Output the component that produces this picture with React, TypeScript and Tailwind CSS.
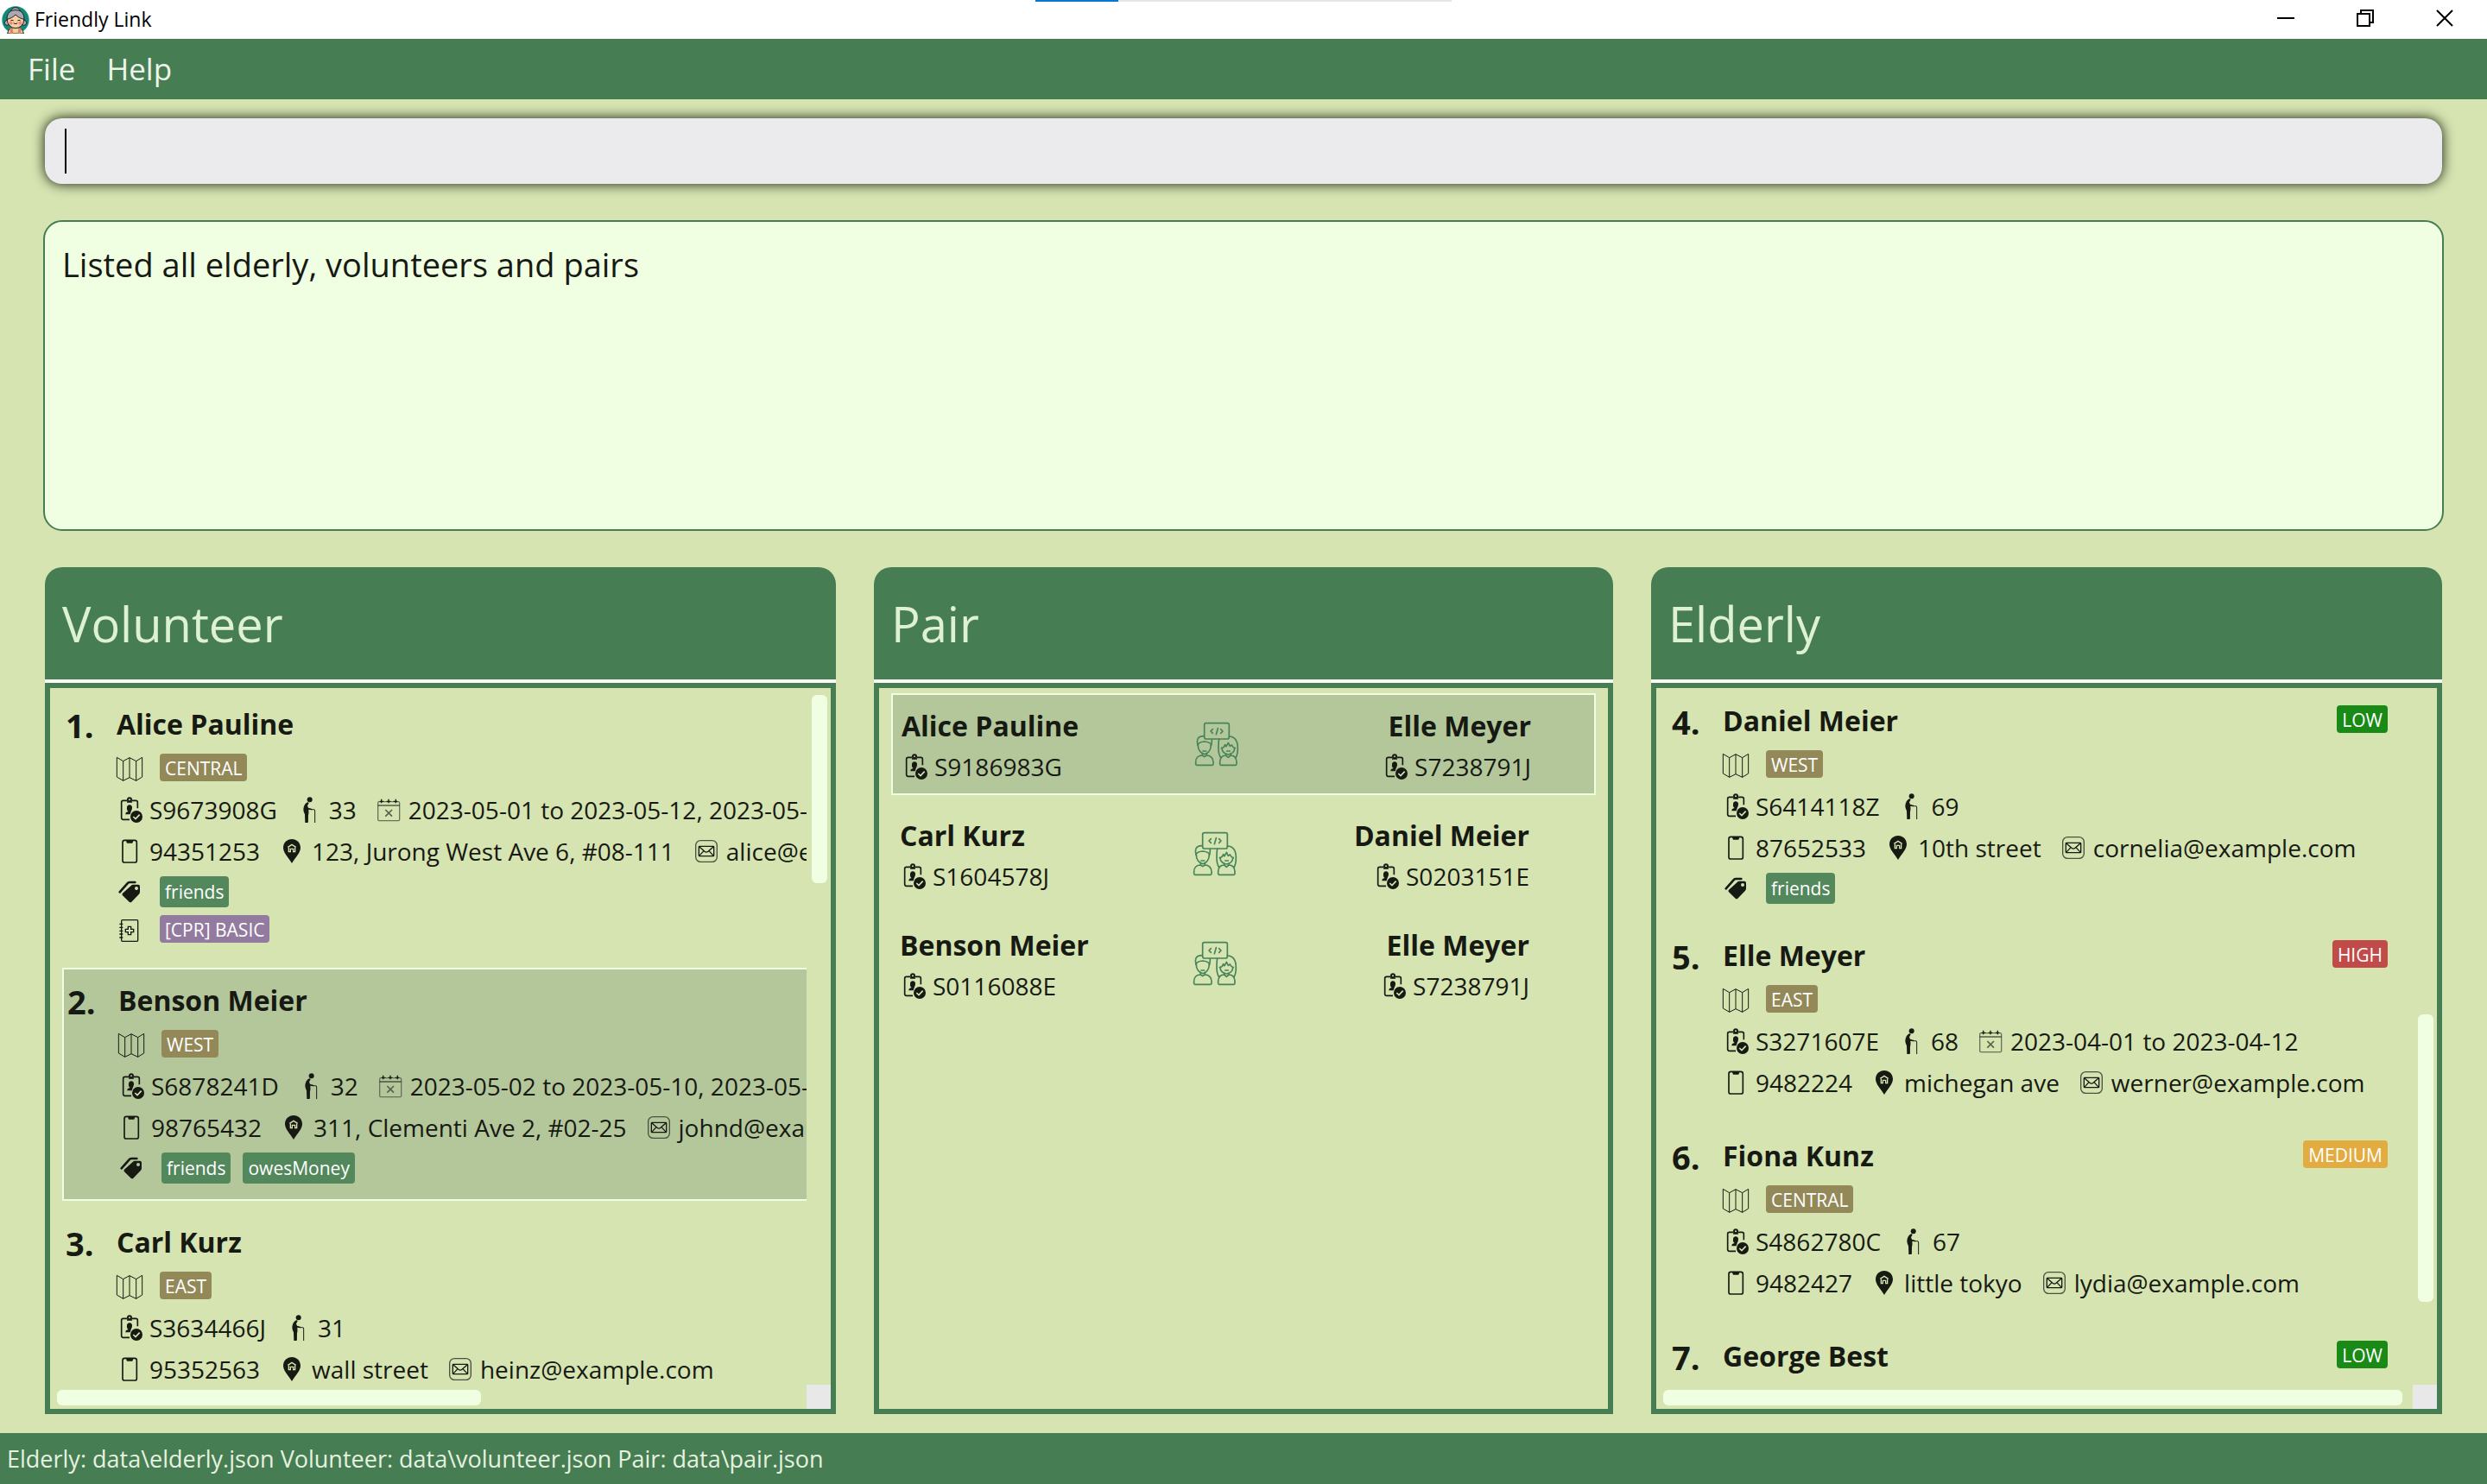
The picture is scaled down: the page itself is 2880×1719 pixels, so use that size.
import type { ReactNode } from "react";

type Level = "LOW" | "MEDIUM" | "HIGH";

interface Person {
  index: number;
  name: string;
  region?: string;
  nric?: string;
  age?: number;
  dates?: string;
  phone?: string;
  address?: string;
  email?: string;
  tags?: string[];
  medical?: string;
  risk?: Level;
  selected?: boolean;
}

const volunteers: Person[] = [
  {
    index: 1,
    name: "Alice Pauline",
    region: "CENTRAL",
    nric: "S9673908G",
    age: 33,
    dates: "2023-05-01 to 2023-05-12, 2023-05-15",
    phone: "94351253",
    address: "123, Jurong West Ave 6, #08-111",
    email: "alice@example.com",
    tags: ["friends"],
    medical: "[CPR] BASIC",
  },
  {
    index: 2,
    name: "Benson Meier",
    region: "WEST",
    nric: "S6878241D",
    age: 32,
    dates: "2023-05-02 to 2023-05-10, 2023-05-15",
    phone: "98765432",
    address: "311, Clementi Ave 2, #02-25",
    email: "johnd@example.com",
    tags: ["friends", "owesMoney"],
    selected: true,
  },
  {
    index: 3,
    name: "Carl Kurz",
    region: "EAST",
    nric: "S3634466J",
    age: 31,
    phone: "95352563",
    address: "wall street",
    email: "heinz@example.com",
  },
];

const elderly: Person[] = [
  {
    index: 4,
    name: "Daniel Meier",
    region: "WEST",
    nric: "S6414118Z",
    age: 69,
    phone: "87652533",
    address: "10th street",
    email: "cornelia@example.com",
    tags: ["friends"],
    risk: "LOW",
  },
  {
    index: 5,
    name: "Elle Meyer",
    region: "EAST",
    nric: "S3271607E",
    age: 68,
    dates: "2023-04-01 to 2023-04-12",
    phone: "9482224",
    address: "michegan ave",
    email: "werner@example.com",
    risk: "HIGH",
  },
  {
    index: 6,
    name: "Fiona Kunz",
    region: "CENTRAL",
    nric: "S4862780C",
    age: 67,
    phone: "9482427",
    address: "little tokyo",
    email: "lydia@example.com",
    risk: "MEDIUM",
  },
  { index: 7, name: "George Best", risk: "LOW" },
];

const pairs = [
  { volunteer: "Alice Pauline", volunteerId: "S9186983G", elder: "Elle Meyer", elderId: "S7238791J", selected: true },
  { volunteer: "Carl Kurz", volunteerId: "S1604578J", elder: "Daniel Meier", elderId: "S0203151E", selected: false },
  { volunteer: "Benson Meier", volunteerId: "S0116088E", elder: "Elle Meyer", elderId: "S7238791J", selected: false },
];

const riskColor: Record<Level, string> = {
  LOW: "bg-[#188a15]",
  MEDIUM: "bg-[#e2ac41]",
  HIGH: "bg-[#c04b48]",
};

const selectedRow = "border-2 border-[#f0ffe2] bg-[#b4c79b]";
const plainRow = "border-y-2 border-r-4 border-transparent";

function Glyph({ children }: { children: ReactNode }) {
  return (
    <svg viewBox="0 0 90 90" className="size-[30px] shrink-0 overflow-visible" fill="none" stroke="currentColor" aria-hidden="true">
      {children}
    </svg>
  );
}

const MapIcon = () => (
  <Glyph>
    <path strokeWidth="3" d="M1 10 23 23 45 11 68 23 89 10V78L68 91 45 80 23 91 1 78Z" />
    <path strokeWidth="3" d="M23 23V91M45 11V80M68 23V91" />
  </Glyph>
);

const IdIcon = () => (
  <Glyph>
    <path strokeWidth="5" d="M37 13H23q-6 0-6 6V73q0 6 6 6H45M53 13H67q6 0 6 6V40" />
    <circle cx="45" cy="10" r="6" strokeWidth="6" />
    <path stroke="none" fill="currentColor" d="M36 16H54V20H36ZM45 28a9 9 0 0 1 9 10c0 6-3 9-4 13l-3 10H31c0-6 3-9 10-10-4-3-6-7-5-13a9 9 0 0 1 9-10Z" />
    <circle cx="69" cy="69" r="21" stroke="none" fill="currentColor" />
    <path stroke="#d5e4b1" strokeWidth="5" d="M58 69 66 77 80 62" />
  </Glyph>
);

const WalkIcon = () => (
  <Glyph>
    <circle cx="47" cy="10" r="9" stroke="none" fill="currentColor" />
    <path
      stroke="none"
      fill="currentColor"
      d="M39 19C31 22 26 32 25 43c0 8 3 13 5 18l1 29h9l1-24 2-6c1-6 0-12 0-16l10 2c2 0 3-4 0-5l-11-3-3-7 5-9c-1-3-3-4-5-3Z"
    />
    <path strokeWidth="3" d="M40 60V89M52 44H59Q65 43 65 48V90" />
  </Glyph>
);

const CalendarIcon = () => (
  <Glyph>
    <rect x="8" y="17" width="75" height="66" rx="4" strokeWidth="4" stroke="#69725a" />
    <path strokeWidth="3" d="M8 30H83" />
    <path strokeWidth="4" d="M14 16H28M38 16H52M62 16H76M20 8V22M45 8V22M70 8V22" />
    <path strokeWidth="5" stroke="#59614b" d="M34 45 57 68M57 45 34 68" />
  </Glyph>
);

const PhoneIcon = () => (
  <Glyph>
    <rect x="21" y="7" width="49" height="77" rx="7" strokeWidth="5" />
    <path stroke="none" fill="currentColor" d="M32 6H59L55 17H36Z" />
  </Glyph>
);

const PinIcon = () => (
  <Glyph>
    <path stroke="none" fill="currentColor" d="M45 3C28 3 15 16 15 33c0 17 16 31 30 54 14-23 30-37 30-54C75 16 62 3 45 3Z" />
    <path stroke="#d5e4b1" strokeWidth="4" d="M31 31 45 22 59 31M34 32V47H40V37H50V47H56V32" />
  </Glyph>
);

const MailIcon = () => (
  <Glyph>
    <rect x="8" y="8" width="74" height="74" rx="17" strokeWidth="4" stroke="#4a5140" />
    <rect x="19" y="28" width="52" height="34" rx="2" strokeWidth="4" />
    <path strokeWidth="4" d="M20 29 39 46Q45 51 51 46L70 29M20 61 36 44M70 61 54 44" />
  </Glyph>
);

const TagIcon = () => (
  <Glyph>
    <path strokeWidth="8" strokeLinecap="round" strokeLinejoin="round" d="M11 46 37 17Q40 12 46 12H64" />
    <path
      fillRule="evenodd"
      stroke="none"
      fill="currentColor"
      d="M50 24Q53 20 58 20H75Q81 20 81 27V46Q81 50 78 53L52 80Q48 84 44 80L21 58Q17 54 21 50ZM69 27a6 6 0 1 0 0 12 6 6 0 0 0 0-12Z"
    />
  </Glyph>
);

const MedicalIcon = () => (
  <Glyph>
    <rect x="17" y="14" width="57" height="74" rx="3" strokeWidth="4" />
    <path strokeWidth="4" d="M10 28H22M10 40H22M10 52H22M10 63H22M10 75H22" />
    <path strokeWidth="4" d="M40 37H50V46H59V56H50V65H40V56H31V46H40Z" />
  </Glyph>
);

const PairIcon = () => (
  <svg viewBox="0 0 156 156" className="mb-1.5 size-[52px] shrink-0 text-[#47835a]" fill="none" stroke="currentColor" strokeWidth="5" strokeLinejoin="round" strokeLinecap="round" aria-hidden="true">
    <rect x="35" y="5" width="86" height="55" rx="6" />
    <path d="M64 26 57 33 64 40M82 23 76 44M92 26 99 33 92 40" />
    <path d="M12 82C8 68 8 50 33 50M61 62Q62 72 58 82" />
    <path d="M12 80Q17 70 35 69 53 70 60 80M13 81C12 98 24 112 36 113 48 112 58 96 58 82M30 102H41" />
    <path d="M28 109V117L35 122 43 117V109M28 117C14 117 5 126 5 140V147Q5 151 9 151H62Q66 151 66 147V140C66 126 56 117 43 117" />
    <path d="M86 61C84 70 84 80 84 92 84 108 86 116 92 125M121 51C144 52 151 68 151 92 151 108 150 116 144 125" />
    <path d="M94 92Q104 90 107 80L111 86 118 73 124 85 130 81Q134 90 142 92M96 92C96 104 106 113 118 114 130 112 140 104 140 92M113 102H124" />
    <path d="M110 111V117L118 124 126 117V111M110 117C98 117 90 126 89 140V147Q89 151 93 151H143Q147 151 147 147V140C146 126 138 117 126 117" />
  </svg>
);

const Logo = () => (
  <svg viewBox="0 0 96 96" className="size-8 shrink-0" aria-hidden="true">
    <circle cx="48" cy="48" r="47" fill="#128a7a" />
    <circle cx="48" cy="22" r="17" fill="#a9a9b4" stroke="#222" strokeWidth="3" />
    <path d="M20 96Q22 74 48 74 74 74 76 96Z" fill="#f3d08a" stroke="#222" strokeWidth="3" />
    <path d="M28 78 38 74 40 96H30ZM68 78 58 74 56 96H66Z" fill="#d98472" />
    <circle cx="19" cy="58" r="9" fill="#a9a9b4" stroke="#222" strokeWidth="3" />
    <circle cx="77" cy="58" r="9" fill="#a9a9b4" stroke="#222" strokeWidth="3" />
    <circle cx="48" cy="48" r="29" fill="#f9cd9f" stroke="#222" strokeWidth="3" />
    <path d="M18 46C18 22 32 14 48 14S78 22 78 46C66 44 56 38 48 30 40 38 30 44 18 46Z" fill="#a9a9b4" stroke="#222" strokeWidth="3" />
    <circle cx="32" cy="59" r="6" fill="#f2868a" />
    <circle cx="64" cy="59" r="6" fill="#f2868a" />
    <path d="M32 50Q36 47 40 50M56 50Q60 47 64 50M42 60Q48 65 54 60" fill="none" stroke="#222" strokeWidth="3" strokeLinecap="round" />
  </svg>
);

function Chip({ color, tall, children }: { color: string; tall?: boolean; children: ReactNode }) {
  return (
    <span className={`flex items-center rounded-[4px] px-1.5 text-[21px] leading-none text-white ${tall ? "h-9" : "h-8 pt-0.5"} ${color}`}>
      {children}
    </span>
  );
}

function Field({ icon, children }: { icon: ReactNode; children: ReactNode }) {
  return (
    <span className="flex shrink-0 items-center gap-2">
      {icon}
      <span>{children}</span>
    </span>
  );
}

function PersonCard({ person }: { person: Person }) {
  const { tags, medical, selected, risk } = person;
  return (
    <li
      className={`flex pt-[11px] pr-[25px] pl-1 ${tags ? "pb-[13px]" : "pb-[19px]"} ${selected ? selectedRow : plainRow}`}
    >
      <span className="flex h-[54px] w-[59px] shrink-0 items-center text-[38px] font-bold">{person.index}.</span>
      <div className="flex-1">
        <div className="flex h-[50px] items-center justify-between">
          <h3 className="text-[32px] font-bold">{person.name}</h3>
          {risk && (
            <div className="mb-1">
              <Chip color={riskColor[risk]}>{risk}</Chip>
            </div>
          )}
        </div>
        {person.region && (
          <div className="flex h-[50px] items-center gap-5">
            <MapIcon />
            <Chip color="bg-[#938958]">{person.region}</Chip>
          </div>
        )}
        {person.nric && (
          <div className="flex h-12 items-center gap-[22px]">
            <Field icon={<IdIcon />}>{person.nric}</Field>
            <Field icon={<WalkIcon />}>{person.age}</Field>
            {person.dates && <Field icon={<CalendarIcon />}>{person.dates}</Field>}
          </div>
        )}
        {person.phone && (
          <div className="flex h-12 items-center gap-[22px]">
            <Field icon={<PhoneIcon />}>{person.phone}</Field>
            <Field icon={<PinIcon />}>{person.address}</Field>
            <Field icon={<MailIcon />}>{person.email}</Field>
          </div>
        )}
        {tags && (
          <div className="flex h-[46px] items-center gap-5">
            <TagIcon />
            <div className="flex gap-3.5">
              {tags.map((tag) => (
                <Chip key={tag} tall color="bg-[#53885c]">
                  {tag}
                </Chip>
              ))}
            </div>
          </div>
        )}
        {medical && (
          <div className="flex h-10 items-center gap-5">
            <MedicalIcon />
            <Chip color="bg-[#927b9e]">{medical}</Chip>
          </div>
        )}
      </div>
    </li>
  );
}

function Panel({ title, children }: { title: string; children: ReactNode }) {
  return (
    <section className="flex min-h-0 min-w-0 flex-col">
      <h2 className="flex h-[130px] shrink-0 items-center rounded-t-[20px] bg-[#467d53] pl-5 text-[56px] text-[#def2d1]">
        {title}
      </h2>
      <div className="flex min-h-0 flex-1 flex-col border-t-4 border-[#fafcf7]">
        <div className="min-h-0 flex-1 border-[6px] border-[#467d53]">{children}</div>
      </div>
    </section>
  );
}

interface ScrollProps {
  start: number;
  size: number;
  across: number;
  children: ReactNode;
}

function ScrollArea({ start, size, across, children }: ScrollProps) {
  return (
    <div className="grid h-full grid-cols-[minmax(0,1fr)_28px] grid-rows-[minmax(0,1fr)_28px]">
      <div className="overflow-hidden pl-3.5">{children}</div>
      <div className="py-2 pr-1 pl-1.5">
        <div className="flex h-full flex-col">
          <div style={{ height: `${start}%` }} />
          <div className="rounded-[6px] bg-[#f0ffe2]" style={{ height: `${size}%` }} />
        </div>
      </div>
      <div className="flex pt-1.5 pr-3 pb-1 pl-2">
        <div className="rounded-[6px] bg-[#f0ffe2]" style={{ width: `${across}%` }} />
      </div>
      <div className="bg-[#e8e8e9]" />
    </div>
  );
}

function PairSide({ name, id, right }: { name: string; id: string; right?: boolean }) {
  return (
    <div className={`flex flex-1 flex-col ${right ? "items-end" : "items-start"}`}>
      <h3 className="flex h-[46px] items-center text-[32px] font-bold">{name}</h3>
      <div className="flex h-12 items-center gap-2">
        <IdIcon />
        <span>{id}</span>
      </div>
    </div>
  );
}

export default function App() {
  return (
    <div className="flex h-screen flex-col overflow-hidden bg-[#d5e4b1] font-['Open_Sans','Noto_Sans',sans-serif] text-[28px] leading-tight whitespace-nowrap text-[#171913]">
      <header className="relative flex h-[45px] shrink-0 items-center bg-white pl-0.5">
        <Logo />
        <h1 className="ml-1.5 flex-1 text-[23px] text-black">Friendly Link</h1>
        <div className="absolute top-0 left-[1199px] flex h-0.5 w-[482px] bg-[#e5e5e5]">
          <div className="w-1/5 bg-[#0078d7]" />
        </div>
        <div className="flex h-full pr-[3px] pb-[3px] text-black">
          <button type="button" aria-label="Minimize" className="flex w-[92px] items-center justify-center">
            <svg viewBox="0 0 20 20" className="size-5" stroke="currentColor" strokeWidth="2">
              <path d="M0 10H20" />
            </svg>
          </button>
          <button type="button" aria-label="Restore" className="flex w-[92px] items-center justify-center">
            <svg viewBox="0 0 20 20" className="size-5" fill="none" stroke="currentColor" strokeWidth="2">
              <path d="M1 5H15V19H1ZM5 5V1H19V15H15" />
            </svg>
          </button>
          <button type="button" aria-label="Close" className="flex w-[92px] items-center justify-center">
            <svg viewBox="0 0 20 20" className="size-5" stroke="currentColor" strokeWidth="2">
              <path d="M1 1 19 19M19 1 1 19" />
            </svg>
          </button>
        </div>
      </header>

      <nav className="flex h-[70px] shrink-0 items-center gap-9 bg-[#467d53] pl-8 text-[35px] text-[#edf5ea]">
        <button type="button">File</button>
        <button type="button">Help</button>
      </nav>

      <main className="flex min-h-0 flex-1 flex-col px-[50px] pt-[22px] pb-[22px]">
        <div className="mx-0.5 flex h-[76px] shrink-0 items-center rounded-[20px] bg-[#ebebed] px-[23px] shadow-[0_0_14px_1px_#2a2f1c]">
          <span className="h-[52px] w-0.5 bg-black" />
          <input type="text" aria-label="Command" className="h-full flex-1 bg-transparent text-[40px] outline-none" />
        </div>

        <output className="mt-[42px] block h-[360px] shrink-0 rounded-[22px] border-2 border-[#467d53] bg-[#f0ffe2] px-5 pt-[26px] text-[38px]">
          Listed all elderly, volunteers and pairs
        </output>

        <div className="mx-0.5 mt-[42px] grid min-h-0 flex-1 grid-cols-[916fr_856fr_916fr] grid-rows-[minmax(0,1fr)] gap-11">
          <Panel title="Volunteer">
            <ScrollArea start={0} size={27.6} across={57.4}>
              <ul className="flex w-max min-w-full flex-col gap-2.5 pt-1">
                {volunteers.map((person) => (
                  <PersonCard key={person.index} person={person} />
                ))}
              </ul>
            </ScrollArea>
          </Panel>

          <Panel title="Pair">
            <ul className="flex flex-col gap-[9px] px-3.5 pt-1.5">
              {pairs.map((pair) => (
                <li
                  key={pair.volunteerId}
                  className={`flex items-center pt-[13px] pr-[73px] pb-[7px] pl-2.5 ${pair.selected ? selectedRow : plainRow}`}
                >
                  <PairSide name={pair.volunteer} id={pair.volunteerId} />
                  <PairIcon />
                  <PairSide name={pair.elder} id={pair.elderId} right />
                </li>
              ))}
            </ul>
          </Panel>

          <Panel title="Elderly">
            <ScrollArea start={46.8} size={42.1} across={100}>
              <ul className="flex flex-col gap-0.5">
                {elderly.map((person) => (
                  <PersonCard key={person.index} person={person} />
                ))}
              </ul>
            </ScrollArea>
          </Panel>
        </div>
      </main>

      <footer className="flex h-[59px] shrink-0 items-center bg-[#467d53] pl-2 text-[27px] text-[#e6f2e0]">
        {"Elderly: data\\elderly.json Volunteer: data\\volunteer.json Pair: data\\pair.json"}
      </footer>
    </div>
  );
}
